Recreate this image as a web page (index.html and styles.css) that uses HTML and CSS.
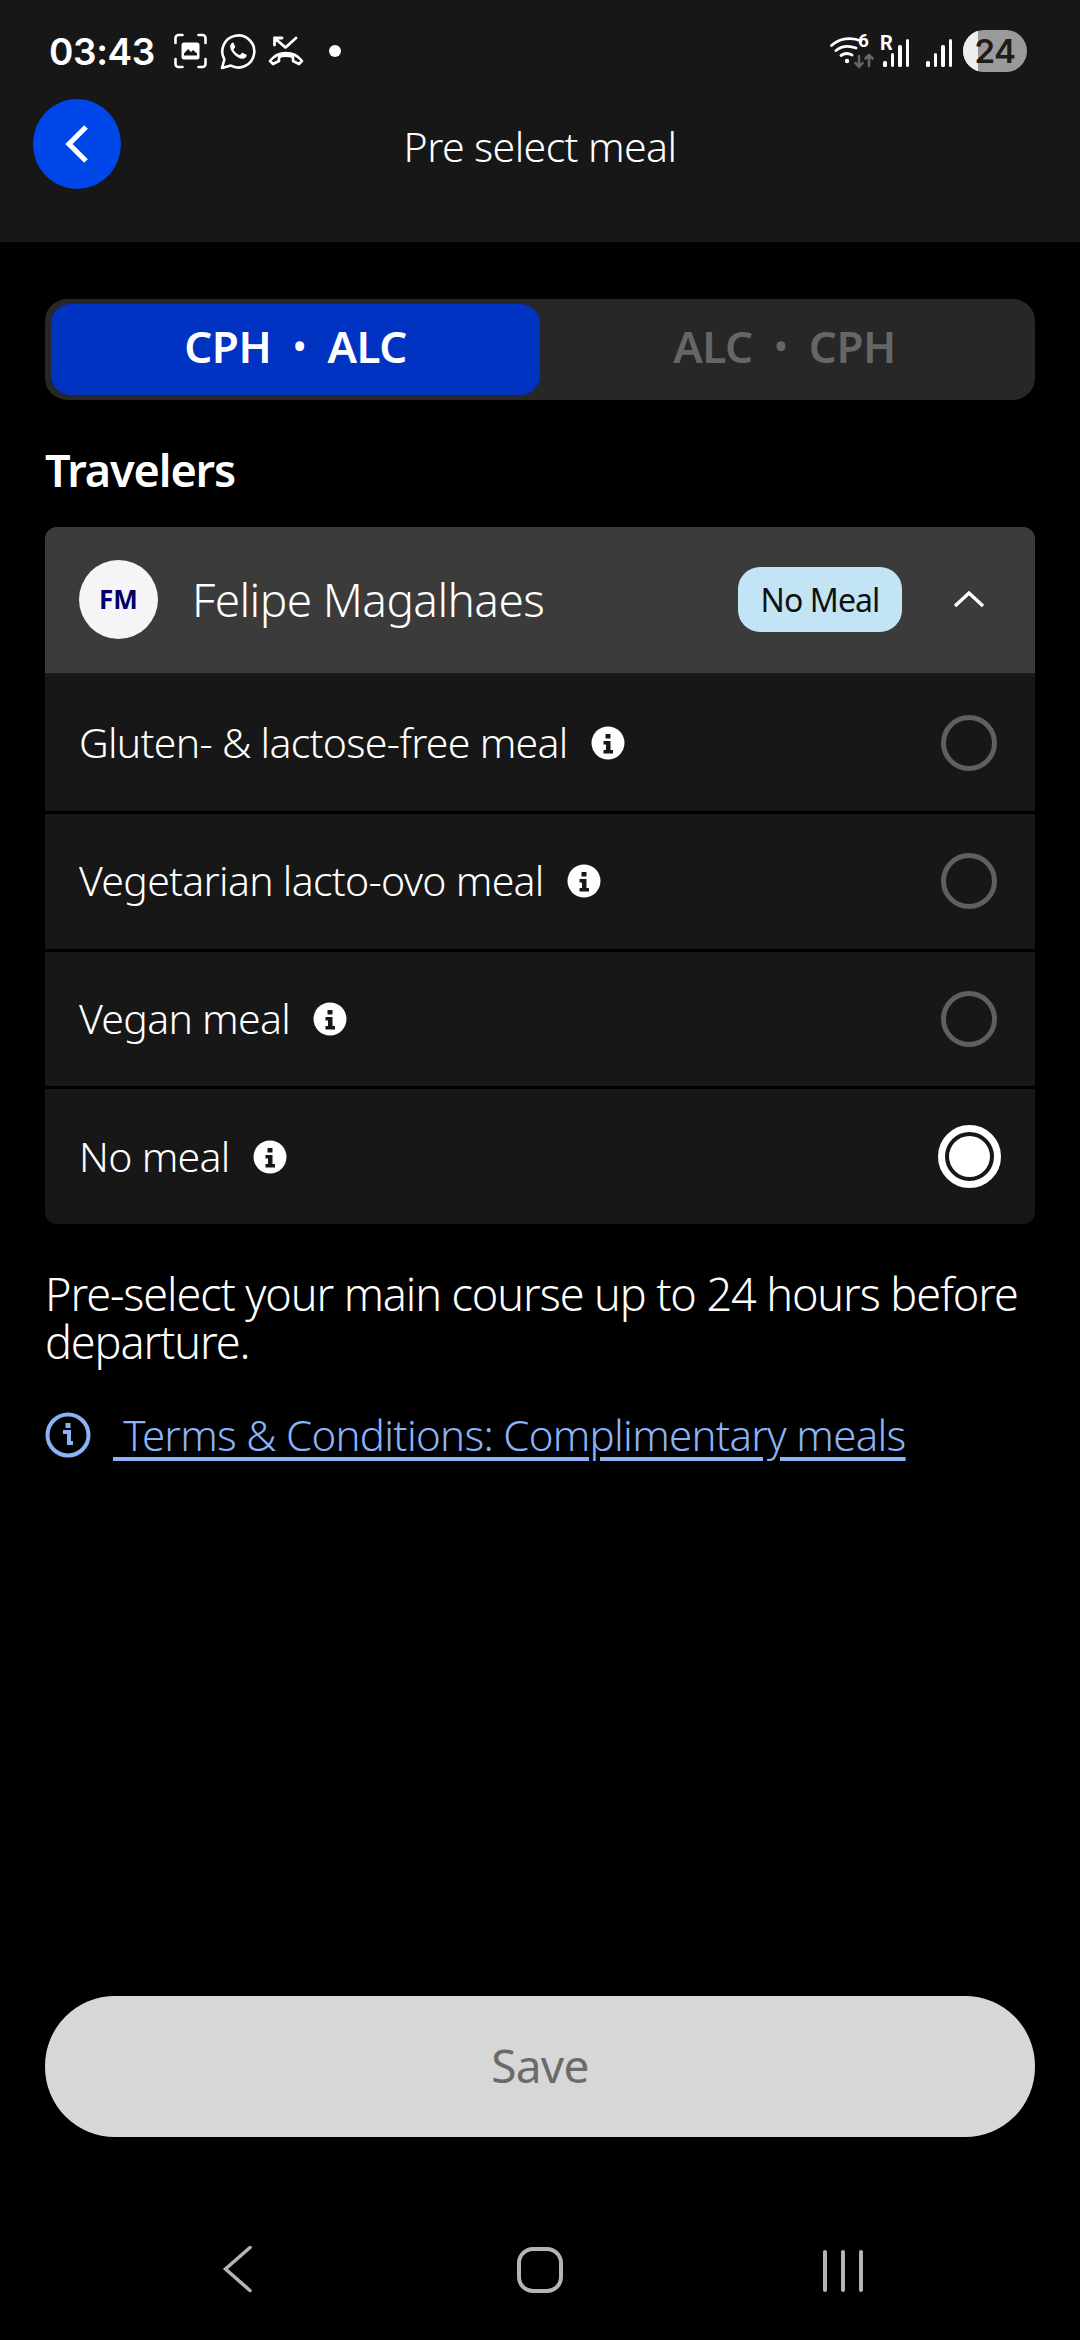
FILE: index.html
```html
<!DOCTYPE html>
<html lang="en">
<head>
<meta charset="utf-8">
<title>Pre select meal</title>
<link rel="stylesheet" href="styles.css">
</head>
<body>
<div class="page">
  <header class="top">
    <div class="status">
      <div class="status-left">
        <span class="time">03:43</span>
        <svg class="ic-capture" width="35" height="36" viewBox="0 0 34 36" fill="none" stroke="#fff" stroke-width="2.6" stroke-linecap="round"><path d="M2 10V5a3 3 0 0 1 3-3h4M25 2h4a3 3 0 0 1 3 3v5M32 26v5a3 3 0 0 1-3 3h-4M9 34H5a3 3 0 0 1-3-3v-5"/><rect x="8" y="9.500" width="18" height="17" rx="2.500" fill="#fff" stroke="none"/><path d="M10.500 20.500l4-4.500 3 3 2-2 4 3.500v2h-13z" fill="#171717" stroke="none"/></svg>
        <svg class="ic-wa" width="36" height="37" viewBox="0 0 36 37" fill="none"><path d="M2 35l2.400-8.600A16 16 0 1 1 10.800 32.600z" stroke="#fff" stroke-width="2.600" stroke-linejoin="round"/><path d="M12.600 9.500c-1.400.8-2.800 2.600-2.400 5 .7 4.300 6.500 10.600 11.300 11.300 2.400.3 4.300-1 5-2.600.3-.8.200-1.300-.3-1.600l-3.400-1.700c-.5-.2-.9-.1-1.200.3l-1.300 1.600c-.3.300-.6.400-1 .2-2.400-1-4.300-2.700-5.600-5-.2-.4-.2-.7.1-1l1.100-1.300c.3-.4.300-.7.200-1.100l-1.500-3.500c-.3-.7-.9-.8-1.500-.5z" fill="#fff"/></svg>
        <svg class="ic-missed" width="36" height="30" viewBox="0 0 36 30" fill="none" stroke="#fff" stroke-width="2.800" stroke-linecap="round" stroke-linejoin="round"><path d="M14 2H6.500v7M6.500 2L17.500 11.500 28 2"/><path d="M2 25c8-10.500 24-10.500 32 0l-3 3-6-3v-4c-4-1.500-10-1.500-14 0v4l-6 3z" stroke-width="2.600"/></svg>
        <span class="dot"></span>
      </div>
      <div class="status-right">
        <span class="wifi">
          <svg width="46" height="34" viewBox="0 0 46 34" fill="none"><path d="M1.500 9.500C9 2.500 21 .5 31 5M6 14.500c5.500-4.500 13-5 20-2.500M11 19.500c3-2.200 7.500-2.500 11-.5" stroke="#fff" stroke-width="2.800" stroke-linecap="round"/><circle cx="17" cy="25" r="2.200" fill="#fff"/><path d="M29 20v10M25.500 27l3.500 4 3.500-4M39 30V19M35.500 22.500L39 19l3.500 3.500" stroke="#666" stroke-width="2.600" stroke-linecap="round" stroke-linejoin="round"/></svg>
          <b class="wifi-six">6</b>
        </span>
        <span class="sim">
          <b class="roam">R</b>
          <span class="bars"><i class="b1"></i><i class="b2"></i><i class="b3"></i><i class="b4"></i></span>
        </span>
        <span class="bars"><i class="b1"></i><i class="b2"></i><i class="b3"></i><i class="b4"></i></span>
        <span class="battery"><span class="battery-fill"></span><span class="battery-num">24</span></span>
      </div>
    </div>
    <div class="toolbar">
      <button class="back" type="button" aria-label="Back">
        <svg width="26" height="40" viewBox="0 0 26 40" fill="none"><path d="M22 3L5 20l17 17" stroke="#fff" stroke-width="5.200"/></svg>
      </button>
      <h1 class="title">Pre select meal</h1>
    </div>
  </header>

  <main class="content">
    <div class="tabs">
      <div class="tab tab-active">CPH<span class="sep">•</span>ALC</div>
      <div class="tab">ALC<span class="sep">•</span>CPH</div>
    </div>

    <h2 class="section">Travelers</h2>

    <section class="card">
      <div class="traveler">
        <span class="avatar">FM</span>
        <span class="name">Felipe Magalhaes</span>
        <span class="badge">No Meal</span>
        <span class="chev-wrap">
          <svg width="32" height="20" viewBox="0 0 32 20" fill="none"><path d="M2 17L16 4l14 13" stroke="#fff" stroke-width="3.400"/></svg>
        </span>
      </div>
      <div class="option">
        <span class="opt-label">Gluten- &amp; lactose-free meal</span>
        <svg class="info" width="34" height="34" viewBox="0 0 34 34"><circle cx="17" cy="17" r="16.500" fill="#fff"/><rect x="14.500" y="8" width="5" height="4.500" fill="#171717"/><path d="M12.500 15h7v9h2.500v3.500H12.500V24h2.500v-5.500h-2.500z" fill="#171717"/></svg>
        <span class="radio"></span>
      </div>
      <div class="option">
        <span class="opt-label">Vegetarian lacto-ovo meal</span>
        <svg class="info" width="34" height="34" viewBox="0 0 34 34"><circle cx="17" cy="17" r="16.500" fill="#fff"/><rect x="14.500" y="8" width="5" height="4.500" fill="#171717"/><path d="M12.500 15h7v9h2.500v3.500H12.500V24h2.500v-5.500h-2.500z" fill="#171717"/></svg>
        <span class="radio"></span>
      </div>
      <div class="option">
        <span class="opt-label">Vegan meal</span>
        <svg class="info" width="34" height="34" viewBox="0 0 34 34"><circle cx="17" cy="17" r="16.500" fill="#fff"/><rect x="14.500" y="8" width="5" height="4.500" fill="#171717"/><path d="M12.500 15h7v9h2.500v3.500H12.500V24h2.500v-5.500h-2.500z" fill="#171717"/></svg>
        <span class="radio"></span>
      </div>
      <div class="option">
        <span class="opt-label">No meal</span>
        <svg class="info" width="34" height="34" viewBox="0 0 34 34"><circle cx="17" cy="17" r="16.500" fill="#fff"/><rect x="14.500" y="8" width="5" height="4.500" fill="#171717"/><path d="M12.500 15h7v9h2.500v3.500H12.500V24h2.500v-5.500h-2.500z" fill="#171717"/></svg>
        <span class="radio radio-on"></span>
      </div>
    </section>

    <p class="note">Pre-select your main course up to 24 hours before departure.</p>

    <div class="terms">
      <svg width="46" height="46" viewBox="0 0 46 46" fill="none"><circle cx="23" cy="23" r="20.500" stroke="#8ab4f8" stroke-width="4"/><rect x="20.500" y="11" width="5" height="5" fill="#8ab4f8"/><path d="M18 20h6v11h4" stroke="#8ab4f8" stroke-width="4"/></svg>
      <a class="terms-link" href="#">&nbsp;Terms &amp; Conditions: Complimentary meals</a>
    </div>
  </main>

  <div class="save-wrap">
    <button class="save" type="button">Save</button>
  </div>

  <nav class="nav">
    <svg width="32" height="48" viewBox="0 0 32 48" fill="none"><path d="M28 2.500L3.500 24 28 45.500" stroke="#b5b5b5" stroke-width="3.500" stroke-linecap="round"/></svg>
    <svg class="nav-home" width="46" height="46" viewBox="0 0 46 46" fill="none"><rect x="2" y="2" width="42" height="42" rx="14" stroke="#b5b5b5" stroke-width="4"/></svg>
    <span class="nav-recent"><i></i><i></i><i></i></span>
  </nav>
</div>
</body>
</html>
```

FILE: styles.css
```css
* { box-sizing: border-box; }
html, body { margin: 0; padding: 0; background: #000; }
body { font-family: "Noto Sans", "Open Sans", sans-serif; color: #fff; }
.page { width: 1080px; height: 2340px; display: flex; flex-direction: column; overflow: hidden; }

.top { height: 242px; background: #171717; flex: none; }
.status { height: 99px; padding: 30px 53px 0 49px; display: flex; justify-content: space-between; align-items: flex-start; }
.status-left { display: flex; align-items: center; height: 42px; }
.time { font-family: Inter, Roboto, sans-serif; font-weight: 600; font-size: 37px; letter-spacing: -0.4px; width: 124px; }
.ic-wa { margin-left: 12px; }
.ic-missed { margin-left: 12px; }
.dot { width: 12px; height: 12px; background: #fff; border-radius: 50%; margin-left: 25px; }

.status-right { display: flex; align-items: center; height: 42px; }
.wifi { position: relative; width: 46px; height: 34px; margin-right: 7px; margin-top: 4px; }
.wifi svg { display: block; }
.wifi-six { position: absolute; left: 28px; top: -5px; font-family: Roboto, sans-serif; font-size: 19px; font-weight: 700; line-height: 20px; }
.sim { position: relative; width: 30px; height: 28px; margin-right: 13px; margin-top: 4px; }
.roam { position: absolute; left: -3px; top: -6px; font-family: Roboto, sans-serif; font-size: 20px; font-weight: 700; line-height: 20px; }
.bars { display: flex; align-items: flex-end; gap: 4px; height: 28px; margin-top: 4px; }
.sim .bars { margin-top: 0; }
.bars i { display: block; width: 3.500px; background: #fff; border-radius: 1.500px; }
.bars .b1 { height: 6px; }
.bars .b2 { height: 14px; }
.bars .b3 { height: 22px; }
.bars .b4 { height: 28px; }
.battery { position: relative; width: 64px; height: 42px; border-radius: 21px; background: #9a9a9a; overflow: hidden; margin-left: 11px; display: flex; align-items: center; justify-content: center; }
.battery-fill { position: absolute; left: 0; top: 0; bottom: 0; width: 15px; background: #eee; }
.battery-num { position: relative; font-family: Inter, Roboto, sans-serif; font-weight: 600; font-size: 33px; color: #1c1c1c; letter-spacing: -0.5px; }

.toolbar { display: grid; grid-template-columns: 88px 1fr 88px; align-items: center; padding: 0 33px; height: 90px; }
.back { width: 88px; height: 90px; border: 0; padding: 0; border-radius: 50%; background: #0047ea; display: flex; align-items: center; justify-content: center; }
.title { margin: 0; font-size: 41px; font-weight: 300; text-align: center; line-height: 90px; letter-spacing: -0.6px; position: relative; top: 2px; }

.content { flex: 1; padding: 57px 45px 0; display: flex; flex-direction: column; min-height: 0; }
.tabs { display: grid; grid-template-columns: 1fr 1fr; height: 101px; background: #272727; border-radius: 22px; padding: 5px 6px; }
.tab { display: flex; align-items: center; justify-content: center; font-size: 44px; font-weight: 600; line-height: 80px; letter-spacing: -0.5px; color: #666; border-radius: 20px; padding-bottom: 8px; }
.tab-active { background: #0033c1; color: #fff; }
.sep { margin: 0 22px; font-size: 34px; }

.section { margin: 42px 0 0; font-size: 45px; font-weight: 600; line-height: 56px; letter-spacing: -1.1px; height: 85px; }

.card { border-radius: 12px; overflow: hidden; background: #171717; display: flex; flex-direction: column; height: 697px; }
.traveler { height: 146px; flex: none; background: #3b3b3b; display: flex; align-items: center; padding: 0 27px 2px 34px; }
.avatar { width: 79px; height: 79px; border-radius: 50%; background: #f5f5f7; color: #00006a; font-weight: 700; font-size: 26px; display: flex; align-items: center; justify-content: center; }
.name { margin-left: 34px; font-size: 46px; font-weight: 300; letter-spacing: -0.6px; flex: 1; }
.badge { width: 164px; height: 65px; border-radius: 22px; background: #c2e4f5; color: #111; display: flex; align-items: center; justify-content: center; font-size: 32px; letter-spacing: -0.9px; }
.chev-wrap { width: 64px; margin: 0 7px 0 35px; display: flex; justify-content: center; }
.chev-wrap svg { display: block; }

.option { flex: 1; display: flex; align-items: center; padding: 0 34px; border-top: 3px solid #000; }
.traveler + .option { border-top-color: #1c1c1c; }
.opt-label { font-size: 41px; font-weight: 300; letter-spacing: -0.7px; line-height: 56px; position: relative; top: -1px; }
.info { margin-left: 23px; flex: none; }
.radio { margin-left: auto; width: 56px; height: 56px; border-radius: 50%; border: 5px solid #5f5f5f; margin-right: 4px; }
.radio-on { width: 63px; height: 63px; margin-right: 0; border: 7px solid #fff; padding: 4px; background: #fff content-box; }

.note { margin: 46px 0 0; font-size: 45px; line-height: 48px; font-weight: 300; letter-spacing: -1.1px; }
.terms { display: flex; align-items: center; margin-top: 40px; }
.terms svg { flex: none; }
.terms-link { margin-left: 22px; font-size: 42px; font-weight: 300; letter-spacing: -0.7px; color: #8ab4f8; text-decoration: underline; text-underline-offset: 6px; white-space: nowrap; }

.save-wrap { padding: 0 45px; flex: none; }
.save { width: 100%; height: 141px; border: 0; border-radius: 70px; background: #d7d7d7; color: #6b6b6b; font: 400 46px "Noto Sans", sans-serif; letter-spacing: -0.7px; padding-bottom: 4px; }

.nav { flex: none; height: 203px; padding: 0 0 47px; display: flex; align-items: flex-end; }
.nav > svg:first-child { margin-left: 222px; }
.nav-home { margin-left: 263px; }
.nav-recent { margin-left: 260px; display: flex; gap: 14px; height: 42px; margin-bottom: 1px; }
.nav-recent i { display: block; width: 4px; background: #b5b5b5; border-radius: 2px; }
```
